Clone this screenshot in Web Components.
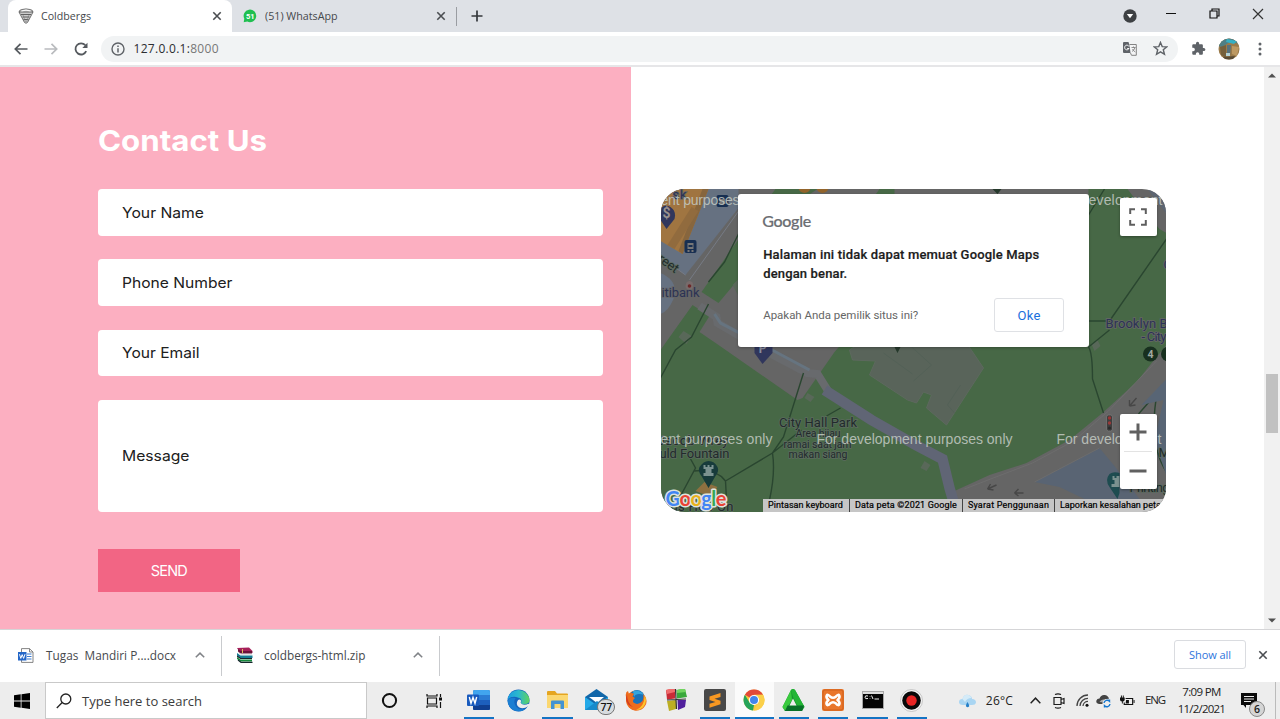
<!DOCTYPE html>
<html lang="en">
<head>
<meta charset="utf-8">
<title>Coldbergs</title>
<style>
html,body{margin:0;height:100%;overflow:hidden;background:#fff}
</style>
</head>
<body>
<desktop-screen></desktop-screen>
<script>
const ICONS = {
  cone:['0 0 16 16','<path d="M1 4Q1 2 4 1.5Q8 .3 12 1.5Q15 2 15 4L14 6L9.5 14.5Q8 16 6.5 14.5L2 6Z" fill="#ccc" stroke="#666" stroke-width=".9"/><path d="M1 4H15M3 6.5H13M4.5 9H11.5M5.5 11.5H10.500" stroke="#555" stroke-width=".9" fill="none"/><path d="M5 7L7.500 14M11 7L8.500 14" stroke="#777" stroke-width=".6"/><path d="M3.500 3Q8 1.200 12.500 3" stroke="#fff" fill="none"/>'],
  close:['0 0 10 10','<path d="M1.300 1.300L8.700 8.700M8.700 1.300L1.300 8.700" stroke="#4a4d51" stroke-width="1.600"/>'],
  wa:['0 0 14 14','<path d="M.7 13.300L1.300 9.700A6.300 6.300 0 1 1 4.300 12.600Z" fill="#1fbf50"/><text x="7.200" y="9.700" text-anchor="middle" font-family="Roboto,sans-serif" font-weight="700" font-size="7.500" fill="#fff">51</text>'],
  plus:['0 0 12 12','<path d="M6 .5V11.500M.5 6H11.500" stroke="#34373b" stroke-width="1.700"/>'],
  back:['0 0 14 12','<path d="M13.500 6H1.500M6.500 .8L1.300 6L6.500 11.200" fill="none" stroke="#55595e" stroke-width="1.700"/>'],
  fwd:['0 0 14 12','<path d="M.5 6H12.500M7.500 .8L12.700 6L7.500 11.200" fill="none" stroke="#b9bbbe" stroke-width="1.700"/>'],
  reload:['0 0 14 14','<path d="M12.200 9.200A5.600 5.600 0 1 1 11.300 3.200" fill="none" stroke="#55595e" stroke-width="1.800"/><path d="M13.500 .8V6H8.300Z" fill="#55595e"/>'],
  info:['0 0 14 14','<circle cx="7" cy="7" r="6" fill="none" stroke="#5f6368" stroke-width="1.400"/><path d="M7 6.200V10.500M7 3.500V5" stroke="#5f6368" stroke-width="1.500"/>'],
  guard:['0 0 14 14','<circle cx="7" cy="7" r="6.700" fill="#3d4043"/><path d="M3.800 5H10.200L7 9.200Z" fill="#fff"/>'],
  min:['0 0 12 12','<path d="M1 5.500H11" stroke="#111" stroke-width="1"/>'],
  max:['0 0 11 11','<path d="M1 3H8V10H1ZM3 3V1H10V8H8" fill="none" stroke="#111" stroke-width="1.200"/>'],
  winx:['0 0 12 12','<path d="M1 1L11 11M11 1L1 11" stroke="#333" stroke-width="1.200"/>'],
  translate:['0 0 14 14','<path d="M0 1Q0 0 1 0H5.500L9 11H1Q0 11 0 10Z" fill="#5f6368"/><path d="M6.500 2.500H13.300V13.300H8.500L7.500 11" fill="#f4f5f6" stroke="#777" stroke-width=".9"/><path d="M6 4.500A2.300 2.300 0 1 0 6 6.500H4.200" fill="none" stroke="#fff" stroke-width="1"/><path d="M8.500 5.500H12.500M10.500 4.500V5.500M12 5.500Q11 8.500 9 9.500M9.500 7Q10.500 9 12.300 10" fill="none" stroke="#777" stroke-width=".8"/>'],
  star:['0 0 14 14','<path d="M7 1.300L8.600 5.200L12.900 5.500L9.600 8.200L10.700 12.400L7 10.100L3.300 12.400L4.400 8.200L1.100 5.500L5.400 5.200Z" fill="none" stroke="#5f6368" stroke-width="1.300"/>'],
  puzzle:['0 0 24 24','<path d="M20.500 11H19V7c0-1.100-.9-2-2-2h-4V3.500a2.500 2.500 0 0 0-5 0V5H4c-1.100 0-2 .9-2 2v3.800h1.500a2.700 2.700 0 0 1 0 5.400H2V20c0 1.100.9 2 2 2h3.800v-1.500a2.700 2.700 0 0 1 5.400 0V22H17c1.100 0 2-.9 2-2v-4h1.500a2.500 2.500 0 0 0 0-5z" fill="#5f6368"/>'],
  avatar:['0 0 22 22','<clipPath id="c"><circle cx="11" cy="11" r="10.500"/></clipPath><g clip-path="url(#c)"><path d="M0 0H22V22H0Z" fill="#9a7a4a"/><path d="M0 0H22V6L12 4L4 9L0 8Z" fill="#4f7f85"/><path d="M9 1L19 3L16 6L8 4Z" fill="#35b0c4"/><path d="M2 9L8 7V20L3 17Z" fill="#75603c"/><path d="M9 7H13L12 18H9Z" fill="#56727d"/><path d="M14 8L21 9L19 18L14 16Z" fill="#bd9962"/><path d="M8 15H12V18H8Z" fill="#b5d1d3"/><path d="M5 19L17 18L15 22H6Z" fill="#594b35"/></g>'],
  dots:['0 0 4 14','<circle cx="2" cy="2" r="1.500" fill="#5f6368"/><circle cx="2" cy="7" r="1.500" fill="#5f6368"/><circle cx="2" cy="12" r="1.500" fill="#5f6368"/>'],
  up:['0 0 8 5','<path d="M0 4.500L4 .5L8 4.500Z" fill="#505050"/>'],
  down:['0 0 8 5','<path d="M0 .5L4 4.500L8 .5Z" fill="#505050"/>'],
  docx:['0 0 16 15','<path d="M3.500 .6H11.500L15 4V14.400H3.500Z" fill="#fff" stroke="#777" stroke-width=".9"/><path d="M11.500 .6V4H15" fill="none" stroke="#777" stroke-width=".9"/><path d="M9 6H13.500M9 8.500H13.500M9 11H13.500" stroke="#3b7bd0" stroke-width="1.200"/><rect x="0" y="4" width="8.500" height="8.500" fill="#2467c8"/><path d="M1.500 6.200L2.800 10.400L4.200 6.600L5.600 10.400L7 6.200" stroke="#fff" fill="none"/>'],
  zip:['0 0 16 16','<path d="M0 1L12 .5L15.500 4V6H3.500Z" fill="#a61f5a"/><path d="M1 2V4.500L3.500 6.500H15V4H4Z" fill="#6b1238"/><path d="M1 5.500L4 7.500H15" stroke="#ddd" fill="none" stroke-width=".8"/><path d="M0 6L3.500 8.500H15.500V11H3L0 8.500Z" fill="#147c93"/><path d="M0 10L3.500 12.500H15V14.500H3.500L0 12Z" fill="#148a3c"/><path d="M0 9L3.500 11.500H15M1 13L4 15.300H15.500" stroke="#15252b" stroke-width="1.200" fill="none"/><path d="M5.500 2V6" stroke="#d8bc5a" stroke-width="1"/>'],
  chev:['0 0 10 6','<path d="M.8 5.300L5 1.100L9.200 5.300" fill="none" stroke="#808387" stroke-width="1.500"/>'],
  chevd:['0 0 10 6','<path d="M.6 5.400L5 1L9.400 5.400" fill="none" stroke="#222" stroke-width="1.300"/>'],
  win:['0 0 16 16','<path d="M0 2.200L6.700 1.300V7.600H0ZM7.500 1.200L16 0V7.600H7.500ZM0 8.400H6.700V14.700L0 13.800ZM7.500 8.400H16V16L7.500 14.800Z" fill="#000"/>'],
  search:['0 0 16 16','<circle cx="9.800" cy="6" r="5" fill="none" stroke="#222" stroke-width="1.300"/><path d="M6.200 9.500L.8 15" stroke="#222" stroke-width="1.300"/>'],
  cortana:['0 0 16 16','<circle cx="8" cy="8" r="6.200" fill="none" stroke="#111" stroke-width="1.900"/>'],
  task:['0 0 17 16','<path d="M1 1V3H11V1M1 15V13H11V15M1.500 5H10.500V11H1.500ZM14.500 1V4M14.500 9V15" fill="none" stroke="#111" stroke-width="1.200"/><rect x="13" y="4.500" width="3" height="3" fill="#111"/>'],
  word:['0 0 23 22','<rect x="6" y="1" width="17" height="20" rx="1.500" fill="#1d5fbd"/><path d="M6 6V2.500Q6 1 7.500 1H21.500Q23 1 23 2.500V6Z" fill="#41a5ee"/><path d="M6 6H23V11H6Z" fill="#2b7cd3"/><path d="M6 16H23V19.500Q23 21 21.500 21H7.500Q6 21 6 19.500Z" fill="#103f91"/><rect x="0" y="5.500" width="12" height="11.500" rx="1" fill="#185abd"/><path d="M2.300 8L4 14.300L6 8.500L8 14.300L9.700 8" fill="none" stroke="#fff" stroke-width="1.400"/>'],
  edge:['0 0 24 24','<defs><linearGradient id="e" x1="0" x2="1"><stop stop-color="#1b9de2"/><stop offset=".5" stop-color="#2cb9cc"/><stop offset="1" stop-color="#5fd35e"/></linearGradient></defs><circle cx="12" cy="12" r="11.500" fill="#1565bd"/><path d="M.6 11A11.500 11.500 0 0 1 23.500 12Q23 16 18 16Q14 16 14.800 13.500Q16 10 12 9Q5 6.500 .6 11Z" fill="url(#e)"/><path d="M14.800 12.500Q13.500 14 15 15.500Q18 17.300 22.500 15.500L24 17V24H19L22 18Q17 21.500 12.500 19Q8.500 16 11.500 11.500Q13.500 10 14.800 12.500Z" fill="#ededed"/><path d="M9 9.500Q6 14 9.500 18.500Q13 22.500 19.500 20.500A11.500 11.500 0 0 1 .6 12Q3 8 9 9.500Z" fill="#1b7ed2"/>'],
  folder:['0 0 21 18','<path d="M0 1Q0 0 1 0H8L10 2.500H20Q21 2.500 21 3.500V17H0Z" fill="#e5a520"/><path d="M0 4H21V17H0Z" fill="#fbd770"/><path d="M4 18V10.500Q4 9.500 5 9.500H16Q17 9.500 17 10.500V18H13.500V13H7.500V18Z" fill="#4493d2"/>'],
  mail:['0 0 23 22','<path d="M0 8L11.500 0L23 8V21H0Z" fill="#1267a9"/><path d="M4 8H19L12 14Z" fill="#fff"/><path d="M0 8L11.500 16L23 8V21H0Z" fill="#23a9e8"/><path d="M0 21L12 12L23 21Z" fill="#168acb"/>'],
  firefox:['0 0 22 22','<circle cx="11" cy="11.500" r="10" fill="#ef6c19"/><circle cx="12" cy="8.500" r="7.500" fill="#1a72b8"/><path d="M8 2Q15 0 19 6Q17 5 14 5Q10 5 9 8Z" fill="#35a5dd"/><path d="M1 8Q0 3 3 2L4 5Q7 3 9 5L7.500 7.500L10 9Q7 11 8.500 13.500Q13 17 17.500 12Q19 9 18 5Q24 11 20 17Q17 22 10 21.500Q1 20 1 8Z" fill="#ee6d1c"/><path d="M19.500 6Q23 13 18 18.500Q15 21 11 21Q20 17 19.500 6Z" fill="#fdc62d"/><path d="M2 5Q2 14 8 18Q1 16 1 9Z" fill="#d43c20"/>'],
  cubes:['0 0 22 22','<path d="M1 1L10 0V9.500L2 10.500Z" fill="#c92b36"/><path d="M11.500 1L20 0L22 8L12 9.500Z" fill="#39a83b"/><path d="M2 12L11 11V20L4 22Z" fill="#bcae24"/><path d="M12.500 11H21L20 18L13 21Z" fill="#51209d"/><path d="M1 1L4 0H10V3L2 5Z" fill="#ef6c6c"/><path d="M12 1L15 0H20L21 3L12 4Z" fill="#72d460"/><path d="M10.500 0L11.500 20M2 11L21 10" stroke="#333" stroke-width="1.200"/>'],
  sublime:['0 0 22 22','<rect width="22" height="22" rx="2" fill="#484848"/><path d="M5.500 7.500L16.500 4V8L10.500 9.800L16.500 11.700V15.300L5.500 18.700V14.800L11.500 12.900L5.500 11Z" fill="#f89822"/>'],
  chrome:['0 0 22 22','<circle cx="11" cy="11" r="10.500" fill="#f8c83b"/><path d="M11 11L1.900 5.750A10.500 10.500 0 0 1 20.100 5.750H11Z" fill="#e24939"/><path d="M1.900 5.750L6.500 13.600L11 16L10 21.450A10.500 10.500 0 0 1 1.900 5.750Z" fill="#26a45a"/><path d="M20.100 5.750A10.500 10.500 0 0 1 10.500 21.500L15.500 13.500L11 6Z" fill="#fbd04a"/><circle cx="11" cy="11" r="5.100" fill="#fff"/><circle cx="11" cy="11" r="4" fill="#4285ec"/>'],
  tri:['0 0 23 22','<path d="M9 1Q11 -1 13 1L22.500 18L20 22H3L.5 18Z" fill="#16962d"/><path d="M9 1L.5 18L3 22L10 11Z" fill="#39ca3e"/><path d="M9 1Q11 -1 13 1L22.500 18H16L11 8Z" fill="#23b535"/><path d="M3 22L5.500 16.500H22L20 22Z" fill="#087128"/><path d="M11 9.500L14.500 16.500H7.500Z" fill="#eee"/>'],
  xampp:['0 0 22 22','<rect width="22" height="22" rx="2" fill="#e9762b"/><rect x="1" y="1" width="20" height="20" rx="2" fill="none" stroke="#cf611d"/><path d="M8 7.500C5 3.500 2.800 8 6.500 11C2.800 14 5 18.500 8 14.500Q11 12 14 14.500C17 18.500 19.200 14 15.500 11C19.200 8 17 3.500 14 7.500Q11 10 8 7.500Z" fill="none" stroke="#fff" stroke-width="2.600" stroke-linejoin="round"/>'],
  cmd:['0 0 22 18','<rect x=".5" y=".5" width="21" height="17" fill="#050505" stroke="#a7a7a7"/><path d="M1 1H21V3H1Z" fill="#ddd"/><path d="M6 5Q3 4 3 6.200T6 7.500M8 5V5.500M8 7V7.500M9.500 4.500L11 8M12.500 8H17" stroke="#eee" fill="none"/>'],
  rec:['0 0 23 23','<circle cx="11.500" cy="11.500" r="11" fill="#f5f5f5" stroke="#bbb" stroke-width=".8"/><circle cx="11.500" cy="11.500" r="9.300" fill="#090909"/><circle cx="11.500" cy="11.500" r="5.200" fill="#e82424"/>'],
  rain:['0 0 17 14','<path d="M4 11Q0 11 0 8Q0 5 3.500 5Q5 0 9.500 1Q13 2 13 5Q17 5 17 8.500Q16.500 11 13 11Z" fill="#a9d5f2"/><path d="M3.500 5Q5 0 9.500 1Q12 2 12.500 4Q8 4 6 8Z" fill="#d4ebf8"/><path d="M8.500 8Q6.500 11 7 12.300Q8.500 14.200 10.200 12.300Q10.500 11 8.500 8Z" fill="#2680c8"/>'],
  cam:['0 0 12 16','<path d="M2 1.500Q5 .2 8 1.500M2 14.500Q5 15.800 8 14.500M1 4.500H8V11.500H1ZM8 6.500L11 5.500V10.500L8 9.500" fill="none" stroke="#1d1d1d" stroke-width="1.200"/>'],
  wifi:['0 0 13 13','<path d="M1 12A11 11 0 0 1 12 1M4 12A8 8 0 0 1 12 4.300M7 12A5 5 0 0 1 12 7.400" fill="none" stroke="#444" stroke-width="1.300"/><circle cx="11" cy="11.300" r="1.500" fill="#111"/>'],
  cloud:['0 0 16 14','<path d="M3 10Q0 9.500 .3 6.800Q1 4.500 3.500 4.500Q5 .3 9 1Q12.500 1.800 13 5L8 10Z" fill="#444"/><path d="M3.500 8Q5 5 8 5.500L13 4.500L12 9Z" fill="#aaa"/><circle cx="11" cy="9.500" r="4.500" fill="#ededed"/><path d="M8 9A3.200 3.200 0 0 1 13.500 7.300V5.500M14 10A3.200 3.200 0 0 1 8.500 11.800V13.500" fill="none" stroke="#1577cf" stroke-width="1.400"/>'],
  batt:['0 0 16 12','<path d="M6 3.500H13.500V9.500H4.500V7.500" fill="none" stroke="#111" stroke-width="1.200"/><path d="M6.500 5H9.500V8.500H6ZM14.500 5H15.500V8H14.500Z" fill="#111"/><path d="M0 2.500H5V5Q4.500 6.500 2.500 6.500Q.5 6.500 0 5ZM1 .5H2V3H1ZM3 .5H4V3H3ZM2 6.500H3V8.500H2Z" fill="#111"/>'],
  note:['0 0 16 15','<path d="M0 0H16V12H5V15L2.500 12H0Z" fill="#0b0b0b"/><path d="M3 3.500H13M3 6H13M3 8.500H10" stroke="#eee" stroke-width="1"/>'],
  full:['0 0 18 18','<path d="M1.200 6V1.200H6M12 1.200H16.800V6M16.800 12V16.800H12M6 16.800H1.200V12" fill="none" stroke="#5e5e5e" stroke-width="2"/>'],
  zin:['0 0 18 18','<path d="M9 .5V17.500M.5 9H17.500" stroke="#606060" stroke-width="3"/>'],
  zout:['0 0 18 18','<path d="M.5 9H17.500" stroke="#606060" stroke-width="3"/>']
};

class UiIcon extends HTMLElement{
  connectedCallback(){
    const [box,body]=ICONS[this.getAttribute('name')], [, ,w,h]=box.split(' ');
    const W=this.getAttribute('w')||w, H=this.getAttribute('h')||h;
    (this.shadowRoot||this.attachShadow({mode:'open'})).innerHTML=
    `<style>:host{display:block;flex:none;width:${W}px;height:${H}px}svg{display:block;width:100%;height:100%}</style><svg viewBox="${box}" preserveAspectRatio="none">${body}</svg>`;
  }
}
/* Text set to a given width, by tracking or (with "stretch") by widening the letters. */
class FitText extends HTMLElement{
  connectedCallback(){
    (this.shadowRoot||this.attachShadow({mode:'open'})).innerHTML='<style>:host{display:block;flex:none;width:max-content;white-space:pre;transform-origin:0 50%}</style><slot></slot>';
    const w=+this.getAttribute('w'), n=this.textContent.length, own=this.getBoundingClientRect().width;
    if(!w) return;
    if(this.hasAttribute('stretch')) this.style.transform=`scaleX(${w/own})`;
    else this.style.letterSpacing=((w-own)/(n-1))+'px';
  }
}
const define=(name,html)=>customElements.define(name,class extends HTMLElement{
  connectedCallback(){ if(!this.shadowRoot) this.attachShadow({mode:'open'}).innerHTML=html; }
});

define('desktop-screen',`<style>
:host{display:grid;grid-template-rows:32px 35px 562px 53px 37px;width:1280px;height:719px;overflow:hidden;font-family:"Open Sans","Noto Sans",sans-serif;color:#333}
</style><tab-strip></tab-strip><browser-bar></browser-bar><site-page></site-page><download-shelf></download-shelf><task-bar></task-bar>`);

define('tab-strip',`<style>
:host{display:flex;background:#dee1e6;font-size:11.500px;color:#45484c;height:32px}
.tab{display:flex;align-items:center;box-sizing:border-box;height:32px}
.on{margin-left:8px;width:224px;background:#fff;border-radius:8px 8px 0 0;padding:0 10px}
.on fit-text{margin-left:7px}.x{margin-left:auto}
.off{width:224px;padding:0 10px 0 11px}.off fit-text{margin-left:8px}
fit-text{margin-top:-1px}
.sep{width:1px;height:19px;background:#9a9da2;margin-top:7px}
.ctl{display:flex;align-items:center;margin-left:auto;padding-right:16px}
</style>
<div class="tab on"><ui-icon name="cone" w="16"></ui-icon><fit-text w="50" stretch>Coldbergs</fit-text><ui-icon class="x" name="close"></ui-icon></div>
<div class="tab off"><ui-icon name="wa"></ui-icon><fit-text w="72.500" stretch>(51) WhatsApp</fit-text><ui-icon class="x" name="close"></ui-icon></div>
<div class="sep"></div><div class="tab" style="padding-left:14px"><ui-icon name="plus"></ui-icon></div>
<div class="ctl"><ui-icon name="guard" style="margin:0 28px 0 0"></ui-icon><ui-icon name="min" style="margin:-4px 32px 0 0"></ui-icon><ui-icon name="max" style="margin:-5px 32px 0 0"></ui-icon><ui-icon name="winx" style="margin-top:-5px"></ui-icon></div>`);

define('browser-bar',`<style>
:host{display:flex;align-items:center;background:#fff;border-bottom:2px solid #e6e6e8;box-sizing:border-box;height:35px;padding:0 18px 0 14px;font-size:12px;color:#2b2d30}
.omni{display:flex;align-items:center;box-sizing:border-box;width:1077px;height:26px;border-radius:13px;background:#f1f3f4;padding:0 10px;margin-left:13px}
.omni fit-text:first-of-type{margin-left:8.500px}span{color:#777}
</style><ui-icon name="back"></ui-icon><ui-icon name="fwd" style="margin-left:16px"></ui-icon><ui-icon name="reload" style="margin-left:16px"></ui-icon>
<div class="omni"><ui-icon name="info"></ui-icon><fit-text w="85">127.0.0.1:<span>8000</span></fit-text><ui-icon name="translate" style="margin-left:auto"></ui-icon><ui-icon name="star" w="15" h="15" style="margin-left:16px"></ui-icon></div>
<ui-icon name="puzzle" w="15" h="15" style="margin-left:13px"></ui-icon><ui-icon name="avatar" w="22" h="22" style="margin-left:12px"></ui-icon><ui-icon name="dots" style="margin-left:18px"></ui-icon>`);

define('site-page',`<style>
:host{display:flex;height:562px;background:#fff}
.map{flex:1;padding:122px 0 0 30px}
.bar{width:16px;background:#f1f1f1;display:flex;flex-direction:column;align-items:center;justify-content:space-between;padding:6px 0;box-sizing:border-box;position:relative}
.thumb{position:absolute;left:2px;top:307px;width:12px;height:59px;background:#c1c1c1}
</style><contact-form></contact-form><div class="map"><map-card></map-card></div><div class="bar"><ui-icon name="up"></ui-icon><div class="thumb"></div><ui-icon name="down"></ui-icon></div>`);

define('contact-form',`<style>
:host{display:block;box-sizing:border-box;width:631.400px;height:562px;background:#fcafc1;padding:52px 28px 0 98.200px;font-family:Inter,"Open Sans",sans-serif}
h2{margin:0;font-size:29px;line-height:43px;color:#fff;font-weight:700;height:70.200px}
.btn{display:flex;align-items:center;justify-content:center;box-sizing:border-box;width:141.500px;height:43px;padding-bottom:1px;margin-top:37.300px;background:#f26584;color:#fff;font-size:14.500px}
</style><h2><fit-text stretch w="169">Contact Us</fit-text></h2>
<form-field><fit-text stretch w="82">Your Name</fit-text></form-field><form-field><fit-text stretch w="110.500">Phone Number</fit-text></form-field><form-field><fit-text stretch w="77.500">Your Email</fit-text></form-field><form-field class="area" style="height:112px;margin:0"><fit-text stretch w="67.500">Message</fit-text></form-field>
<div class="btn"><fit-text w="37">SEND</fit-text></div>`);
define('form-field',`<style>:host{display:flex;align-items:center;box-sizing:border-box;width:505px;height:46.800px;margin-bottom:23.400px;background:#fff;border-radius:4px;padding-left:23.500px;font-size:14.500px;color:#202020}</style><slot></slot>`);

define('map-card',`<style>
:host{display:block;position:relative;width:505px;height:323px;border-radius:24px;overflow:hidden;font-family:Roboto,sans-serif}
map-art{display:block}
.box{position:absolute;background:#fff;border-radius:2px;display:flex;align-items:center;justify-content:center;box-shadow:0 1px 3px #0005}
.zoom{flex-direction:column;gap:10px}
.zoom i{width:28px;height:1px;background:#e3e3e3}
map-dialog{position:absolute;left:76.800px;top:5px}
.attr{position:absolute;right:0;bottom:0;display:flex;width:403.500px;height:13px;background:#c6c6c6;font-size:9px;line-height:13px;color:#000;-webkit-text-stroke:.2px #000}
.attr div{box-sizing:border-box;padding-left:5px;border-right:1px solid #444}
.attr div:last-child{border:0}
</style><map-art></map-art>
<div class="attr"><div style="width:87px"><fit-text w="75">Pintasan keyboard</fit-text></div><div style="width:113px"><fit-text w="102">Data peta ©2021 Google</fit-text></div><div style="width:92px"><fit-text w="81">Syarat Penggunaan</fit-text></div><div><fit-text w="101">Laporkan kesalahan peta</fit-text></div></div>
<div class="box" style="left:458.500px;top:9px;width:37px;height:38px"><ui-icon name="full"></ui-icon></div>
<div class="box zoom" style="left:458.500px;top:225px;width:37px;height:75px"><ui-icon name="zin"></ui-icon><i></i><ui-icon name="zout"></ui-icon></div>
<map-dialog></map-dialog>`);

define('map-dialog',`<style>
:host{display:block;box-sizing:border-box;width:351px;height:153px;background:#fff;border-radius:3px;padding:15px 25px 0 24px;box-shadow:0 1px 3px #0004}
.logo{font:500 16px/24px Lato,sans-serif;color:#6b6e72;-webkit-text-stroke:.2px #6b6e72}
.msg{margin:13px 0 0 1px;font-size:13px;line-height:18.500px;font-weight:500;color:#1c1c1c;-webkit-text-stroke:.2px #1c1c1c}
.row{display:flex;align-items:center;justify-content:space-between;margin-top:15px;padding-left:1px;font-size:11.500px;color:#666}
.ok{display:flex;align-items:center;justify-content:center;width:68px;height:32px;border:1px solid #dfe1e5;border-radius:3px;color:#1a6fdc;font-size:13px}
</style><div class="logo"><fit-text w="49">Google</fit-text></div>
<div class="msg"><fit-text w="276">Halaman ini tidak dapat memuat Google Maps</fit-text><fit-text w="84">dengan benar.</fit-text></div>
<div class="row"><fit-text w="155">Apakah Anda pemilik situs ini?</fit-text><div class="ok"><fit-text w="23">Oke</fit-text></div></div>`);

define('map-art',`<style>:host{display:block}svg{display:block}.w{fill:#c4cbc4;font:14px "Liberation Sans",sans-serif;opacity:.85}.l{font:13px Roboto,sans-serif;fill:#222b2c;stroke:#5c6b5f;stroke-width:1.500px;paint-order:stroke}.b{fill:#2c3354;stroke:#666}.t{fill:none;stroke:#2a4630;stroke-width:1.400}</style>
<svg width="505" height="323" viewBox="661.500 189 505 323">
<rect x="661" y="189" width="506" height="324" fill="#656565"/>
<path d="M661 189H739V208L686 275L661 257Z" fill="#667181"/>
<path d="M661 189H709L683 254L661 241Z" fill="#a07541"/><path d="M709 189L683 254L679 251L703 189Z" fill="#87663e"/><path d="M692 207L699 211L675 249L668 245Z" fill="#916b3e"/>
<path d="M690 280L742 207M661 257L686 275" stroke="#767b85" fill="none"/>
<path d="M661 273Q680 281 674 299Q669 311 661 314Z" fill="#667181"/>
<path d="M742 235L702 292L719 303L745 272Z" fill="#476946"/>
<path d="M693 305L710 316L700 332L719 345L798 400L803 398L835 352L850 335H1089V189H1128L1140 205L1160 229L1167 233V345L1153 362L1137 382L1103 413L1070 440L1027 463L990 475L955 491L940 513H661V350Z" fill="#476846"/>
<path d="M776 189H818L806 197H770ZM880 189H895V196H875Z" fill="#476846"/>
<path d="M679 337L684 331L692 336L687 344ZM733 285L740 278V298ZM1092 344L1098 340L1101 346L1095 351ZM808 393L815 397L811 402L805 398ZM925 461L931 465L927 471L921 468Z" fill="#596859"/>
<path d="M865 340H965L984 368L947 425L927 408L932 395L924 392L917 403L908 400L870 375L876 361L853 360L850 350Z" fill="#59645a" stroke="#5d695e"/>
<path d="M910 345L932 365L914 381M961 385L948 405L955 413M884 353L913 374" fill="none" stroke="#536157"/>
<path d="M700 306L717 317L718 323L766 351L808 373L818 374L828 390" fill="none" stroke="#686a6d" stroke-width="8"/><path d="M715 314L721 323L767 347L810 370" fill="none" stroke="#667480" stroke-width="3"/>
<path d="M825 390L872 420L916 445L943 459L950 488L955 505" fill="none" stroke="#606575" stroke-width="10.500"/>
<path class="t" d="M742 228L725 262L709 282M709 304L692 337L676 350L661 378M804 373L784 437L773 453Q776 473 770 500M841 408L827 416M802 430L773 453L726 481M690 457L696 468L681 496M726 481Q717 468 694 471M726 481L727 500M1089 321H1110L1167 239M1110 330L1089 347Q1093 352 1093 379L1104 413M1089 215L1105 189M1167 382L1139 414M1158 391Q1148 443 1167 472"/>
<path d="M1035 482L1100 448L1115 466L1140 499H1085L1060 487Z" fill="#596473"/><path d="M1148 189H1167V214Z" fill="#5c6572"/><path d="M1142 405L1167 379V476L1155 440L1164 400Z" fill="#586575"/>
<path d="M965 489L1033 463L1074 441L1109 411L1157 361M1035 482L1100 448" fill="none" stroke="#6d6d6d"/>
<g stroke="#474747" fill="none" stroke-width="1.400"><path d="M997 485L988 489M988 489L991 484M988 489L994 490M1024 493H1015M1015 493L1019 489M1015 493L1019 496M1137 398L1130 406M1130 406V400M1130 406L1136 405"/></g>
<path d="M705 482L718 487L711 497L696 491Z" fill="#8e7040"/>
<g fill="#182f52"><rect x="717" y="195" width="12" height="12" rx="2"/><rect x="685" y="240" width="12" height="13" rx="2"/><path d="M667 229L661 220V209Q665 203 671 207Q677 211 675 219Z" fill="#30365c"/><path d="M763 364L755 353V341H773V353Z" fill="#30365c"/></g>
<g fill="#777"><path d="M688 243H694V249H688ZM688 250H690V252H688ZM692 250H694V252H692ZM720 199H726V204H720Z"/></g><path d="M689 245H693V247H689Z" fill="#182f52"/>
<text x="667" y="218" text-anchor="middle" font-family="Roboto" font-weight="700" font-size="14" fill="#99908d">$</text><text x="763" y="353" text-anchor="middle" font-family="Roboto" font-weight="700" font-size="12" fill="#8b8e9d">P</text>
<g fill="#173b3b"><path d="M709 488L702 476Q698 471 700 467Q704 461 709 461Q715 461 718 467Q720 471 716 476Z"/><path d="M1118 499L1110 487Q1105 480 1110 474Q1114 471 1120 473V493Z" fill="#1e4c50"/><circle cx="1151" cy="354" r="7.500" fill="#18301f"/><circle cx="1169" cy="354" r="7.500" fill="#18301f"/></g>
<path d="M704 465H706V467H708V465H710V467H712V465H714V469H712V473H714V476H704V473H706V469H704ZM1113 476H1115V478H1117V476H1120V487H1112V484H1115V480H1113Z" fill="#7b9290"/>
<text x="1151" y="358" text-anchor="middle" font-family="Roboto" font-weight="700" font-size="10.500" fill="#a2aaa2">4</text>
<circle cx="805" cy="187" r="6" fill="#92642b"/><circle cx="823" cy="187" r="6" fill="#92642b"/><path d="M993 189H1002L998 194ZM895 347H901L898 353Z" fill="#26392c"/>
<path d="M686 287Q686 281 690 281Q694 281 694 287L690 293Z" fill="#786b6b"/><circle cx="690" cy="286" r="1.800" fill="#6d2828"/>
<rect x="1107" y="415" width="6" height="16" rx="2" fill="#3e3e3e" stroke="#777" stroke-width=".8"/><circle cx="1110" cy="418" r="1.700" fill="#9b3333"/><circle cx="1110" cy="423" r="1.700" fill="#993939"/><circle cx="1110" cy="428" r="1.500" fill="#292929"/>
<text class="l b" x="673" y="199" textLength="14">sk</text><text class="l" transform="translate(654 258) rotate(36)" font-size="12">treet</text><text class="l b" x="662" y="297" textLength="38">itibank</text>
<text class="l b" x="1106" y="328" textLength="62">Brooklyn B</text><text class="l b" x="1142" y="341" textLength="25">- City</text><text class="l b" x="1164" y="269">C</text>
<text class="l" x="779.500" y="427" textLength="78">City Hall Park</text><g><text class="l" style="font-size:10.500px" x="796" y="437" textLength="45">Area hijau</text><text class="l" style="font-size:10.500px" x="784" y="448" textLength="68">ramai saat jam</text><text class="l" style="font-size:10.500px" x="789" y="458" textLength="59">makan siang</text></g>
<text class="l" x="658" y="445" textLength="71">Jacob Wrey</text><text class="l" x="660" y="458" textLength="70">uld Fountain</text><text class="l" x="671" y="511" textLength="63">us Hop On</text><text class="l" x="1130" y="492" textLength="40">Printing</text><text class="l" x="1159" y="457">M</text>
<text class="w" x="661" y="204.500" textLength="79">ent purposes</text><text class="w" x="1089" y="204.500" textLength="74">evelopment</text><text class="w" x="661" y="444" textLength="112">ent purposes only</text><text class="w" x="817" y="444" textLength="196">For development purposes only</text><text class="w" x="1057" y="444" textLength="105">For development</text>
<text x="666" y="506" textLength="61" font-family="Lato" font-size="20" font-weight="700" stroke="#dfe3df" stroke-width="3" paint-order="stroke" stroke-linejoin="round"><tspan fill="#4285f4">G</tspan><tspan fill="#ea4335">o</tspan><tspan fill="#e9b21b">o</tspan><tspan fill="#4285f4">g</tspan><tspan fill="#34a853">l</tspan><tspan fill="#ea4335">e</tspan></text>
</svg>`);

define('download-shelf',`<style>
:host{display:flex;align-items:center;box-sizing:border-box;height:53px;background:#fff;border-top:1px solid #d5d5d7;padding:0 12px 0 18px;font-size:11.800px;color:#46494d}
.i{display:flex;align-items:center;box-sizing:border-box;height:40px;padding-bottom:2px!important;border-right:1px solid #c9cbce}.i .c{margin-left:auto}
.all{display:flex;align-items:center;justify-content:center;width:70px;height:27px;border:1px solid #dadce0;border-radius:3px;margin:-3px 0 0 auto;color:#2e74dc;font-size:11px}
</style><div class="i" style="width:204px;padding-right:16px"><ui-icon name="docx"></ui-icon><fit-text w="130" style="margin-left:12px">Tugas  Mandiri P....docx</fit-text><ui-icon class="c" name="chev"></ui-icon></div>
<div class="i" style="width:218px;padding:0 16px 0 15px"><ui-icon name="zip"></ui-icon><fit-text w="101.500" style="margin-left:11px">coldbergs-html.zip</fit-text><ui-icon class="c" name="chev"></ui-icon></div>
<div class="all"><fit-text w="42">Show all</fit-text></div><ui-icon name="close" style="margin:-2px 0 0 12px"></ui-icon>`);

define('task-bar',`<style>
:host{display:flex;align-items:center;height:37px;background:#ededed;font-size:12px;color:#222}
.search{display:flex;align-items:center;box-sizing:border-box;width:322px;height:37px;background:#fff;border:1px solid #c9c9c9;margin-left:15px;padding-left:10px;font-size:13px;color:#3b3b3b}
.apps{display:grid;grid-template-columns:repeat(12,39.400px);margin-left:16px;height:37px}
.tray{display:flex;align-items:center;height:37px;margin-left:auto}
.clock{display:flex;flex-direction:column;align-items:center;line-height:17px;font-size:11.500px;margin:-2px 0 0 13px}
.n{position:relative;margin:0 0 0 16px}.b{position:absolute;left:8px;top:8px;width:14px;height:14px;border:1px solid #888;border-radius:50%;background:#d5d5d5;text-align:center;font:600 10.500px/14px "Open Sans",sans-serif}
.edge{width:1px;height:37px;background:#bbb;margin-left:18px}
</style><ui-icon name="win" style="margin-left:14px"></ui-icon>
<div class="search"><ui-icon name="search" w="16" h="16"></ui-icon><fit-text w="120" style="margin-left:10px">Type here to search</fit-text></div>
<ui-icon name="cortana" w="17" h="17" style="margin-left:14px"></ui-icon><ui-icon name="task" style="margin-left:28px"></ui-icon>
<div class="apps"><task-app on><ui-icon name="word"></ui-icon></task-app><task-app><ui-icon name="edge" w="23" h="23"></ui-icon></task-app><task-app on><ui-icon name="folder"></ui-icon></task-app><task-app><ui-icon name="mail"></ui-icon><span slot="badge">77</span></task-app><task-app><ui-icon name="firefox"></ui-icon></task-app><task-app><ui-icon name="cubes"></ui-icon></task-app><task-app on><ui-icon name="sublime"></ui-icon></task-app><task-app on active><ui-icon name="chrome"></ui-icon></task-app><task-app on><ui-icon name="tri"></ui-icon></task-app><task-app on><ui-icon name="xampp"></ui-icon></task-app><task-app on><ui-icon name="cmd"></ui-icon></task-app><task-app on><ui-icon name="rec"></ui-icon></task-app></div>
<div class="tray"><ui-icon name="rain"></ui-icon><fit-text w="27" style="margin-left:10px">26°C</fit-text><ui-icon name="chevd" w="11" h="7" style="margin-left:17px"></ui-icon><ui-icon name="cam" style="margin-left:12px"></ui-icon><ui-icon name="wifi" style="margin-left:11px"></ui-icon><ui-icon name="cloud" style="margin-left:7px"></ui-icon><ui-icon name="batt" w="15" style="margin-left:8px"></ui-icon><fit-text w="21" style="margin:-2px 0 0 10px;font-size:11.500px">ENG</fit-text>
<div class="clock"><fit-text w="39">7:09 PM</fit-text><fit-text w="48">11/2/2021</fit-text></div><div class="n"><ui-icon name="note"></ui-icon><span class="b">6</span></div><div class="edge"></div><div style="width:4px"></div></div>`);
define('task-app',`<style>
:host{display:flex;align-items:center;justify-content:center;position:relative;height:37px;box-sizing:border-box}
:host([active]){background:#fbfbfb}
:host([on])::after{content:"";position:absolute;left:4.500px;right:4.500px;bottom:0;height:2.500px;background:#1474c4}
:host([active])::after{left:.5px;right:.5px}
::slotted([slot=badge]){position:absolute;left:20px;top:17px;width:16px;height:14px;border:1px solid #777;border-radius:8px;background:#d7dcdf;font:600 10.500px/14px "Open Sans",sans-serif;text-align:center;letter-spacing:-.4px;color:#111}
::slotted(ui-icon){margin-top:-1px}
</style><slot></slot><slot name="badge"></slot>`);
customElements.define('ui-icon',UiIcon);
customElements.define('fit-text',FitText);
</script>
</body>
</html>
